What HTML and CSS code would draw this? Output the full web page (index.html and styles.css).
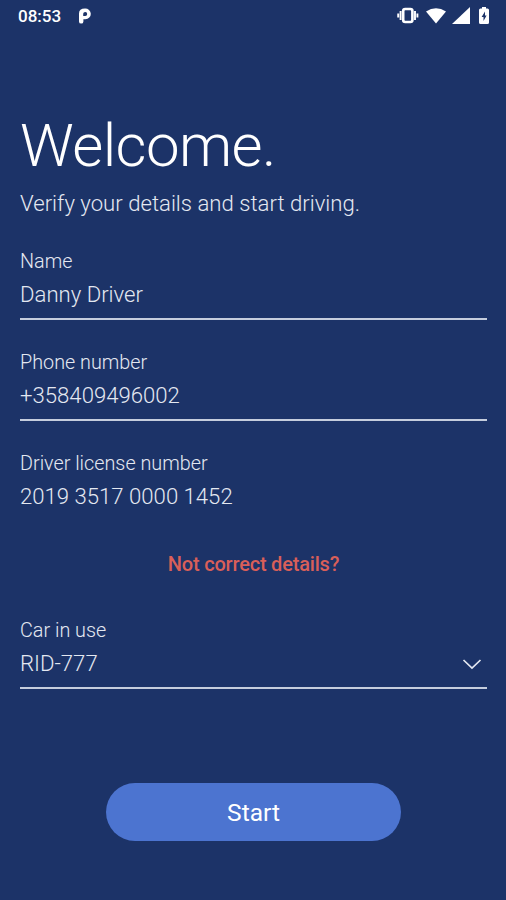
FILE: index.html
```html
<!doctype html>
<html lang="en">
<head>
	<meta charset="utf-8">
	<title>Welcome</title>
	<link rel="stylesheet" href="styles.css">
</head>
<body>
	<div class="screen">
		<header class="statusbar">
			<span class="time">08:53</span>
			<svg class="parking" width="14" height="16" viewBox="0 0 14 16"><path fill="#fff" fill-rule="evenodd" d="M1 5.5Q1 .5 7 .5A5.6 5.4 0 0 1 7.4 11.3H5.4V13.4A2.2 2.2 0 0 1 1 13.4ZM5.2 5.8V8H7.3A2 2 0 1 0 5.2 5.8Z"/></svg>
			<div class="status-icons">
				<svg width="22" height="18" viewBox="0 0 22 18"><rect x="6.2" y="2" width="9.2" height="13" rx="2" fill="none" stroke="#fff" stroke-width="2.6"/><path d="M3.6 4v9M1.2 6.5v4M18 4v9M20.4 6.5v4" stroke="#fff" stroke-width="1.9"/></svg>
				<svg class="wifi" width="20" height="17" viewBox="0 0 20 17"><path d="M0 3.5Q10-3 20 3.5L10 15.5Z" fill="#fff"/></svg>
				<svg class="signal" width="18" height="18" viewBox="0 0 18 18"><path d="M18 0V17H0Z" fill="#fff"/></svg>
				<svg class="battery" width="12" height="18" viewBox="0 0 12 18"><path fill="#fff" fill-rule="evenodd" d="M4 0H8V1.5H9.5Q11 1.5 11 3V15.5Q11 17 9.5 17H2.5Q1 17 1 15.5V3Q1 1.5 2.5 1.5H4ZM7 4.5L3.6 10H5.5V14L8.6 8.5H7Z"/></svg>
			</div>
		</header>
		<main class="content">
			<h1>Welcome.</h1>
			<p class="intro">Verify your details and start driving.</p>
			<div class="field">
				<div class="label">Name</div>
				<div class="value">Danny Driver</div>
			</div>
			<div class="field">
				<div class="label">Phone number</div>
				<div class="value">+358409496002</div>
			</div>
			<div class="field license">
				<div class="label">Driver license number</div>
				<div class="value">2019 3517 0000 1452</div>
			</div>
			<a class="wrong" href="#">Not correct details?</a>
			<div class="field car">
				<div class="label">Car in use</div>
				<div class="value">RID-777
					<svg class="chevron" width="20" height="12" viewBox="0 0 20 12"><path d="M1.5 2L10 10L18.5 2" fill="none" stroke="#e4e8f1" stroke-width="1.7"/></svg>
				</div>
			</div>
			<button class="start">Start</button>
		</main>
	</div>
</body>
</html>
```
FILE: styles.css
```css
* { margin: 0; padding: 0; box-sizing: border-box; }
body {
	background: #1c3368;
	font-family: Roboto, sans-serif;
	color: #e4e8f1;
}
.screen { width: 506px; height: 900px; overflow: hidden; }
.statusbar {
	display: flex;
	align-items: center;
	height: 32px;
	padding: 0 16px 0 18px;
	color: #fff;
}
.time { font-size: 17px; font-weight: 500; }
.parking { margin-left: 17px; }
.status-icons {
	display: flex;
	align-items: center;
	margin-left: auto;
}
.wifi { margin-left: 7px; }
.signal { margin-left: 6px; }
.battery { margin-left: 8px; }
.content {
	display: flex;
	flex-direction: column;
	padding: 78px 19px 0 20px;
}
h1 {
	height: 72px;
	font-size: 60px;
	line-height: 72px;
	font-weight: 300;
	letter-spacing: -0.6px;
	color: #fff;
}
.intro {
	margin-top: 6px;
	font-size: 22.15px;
	line-height: 30px;
	font-weight: 300;
}
.field {
	height: 72px;
	margin-top: 29px;
	border-bottom: 2px solid #c5cddd;
}
.intro + .field { margin-top: 30px; }
.label {
	padding-top: 1px;
	font-size: 19.8px;
	line-height: 26px;
	font-weight: 300;
}
.value {
	display: flex;
	align-items: center;
	justify-content: space-between;
	margin-top: 4px;
	font-size: 22.15px;
	line-height: 30px;
	font-weight: 300;
}
.license { border-bottom: none; }
.wrong {
	align-self: center;
	margin-top: 29px;
	font-size: 20px;
	line-height: 26px;
	font-weight: 500;
	letter-spacing: -0.2px;
	color: #d95f59;
	text-decoration: none;
}
.car { margin-top: 40px; }
.chevron { margin: 2px 5px 0 0; }
.start {
	align-self: center;
	width: 295px;
	height: 58px;
	margin-top: 94px;
	border: none;
	border-radius: 29px;
	background: #4c74d0;
	color: #fff;
	font-family: inherit;
	font-size: 24.5px;
}
```
